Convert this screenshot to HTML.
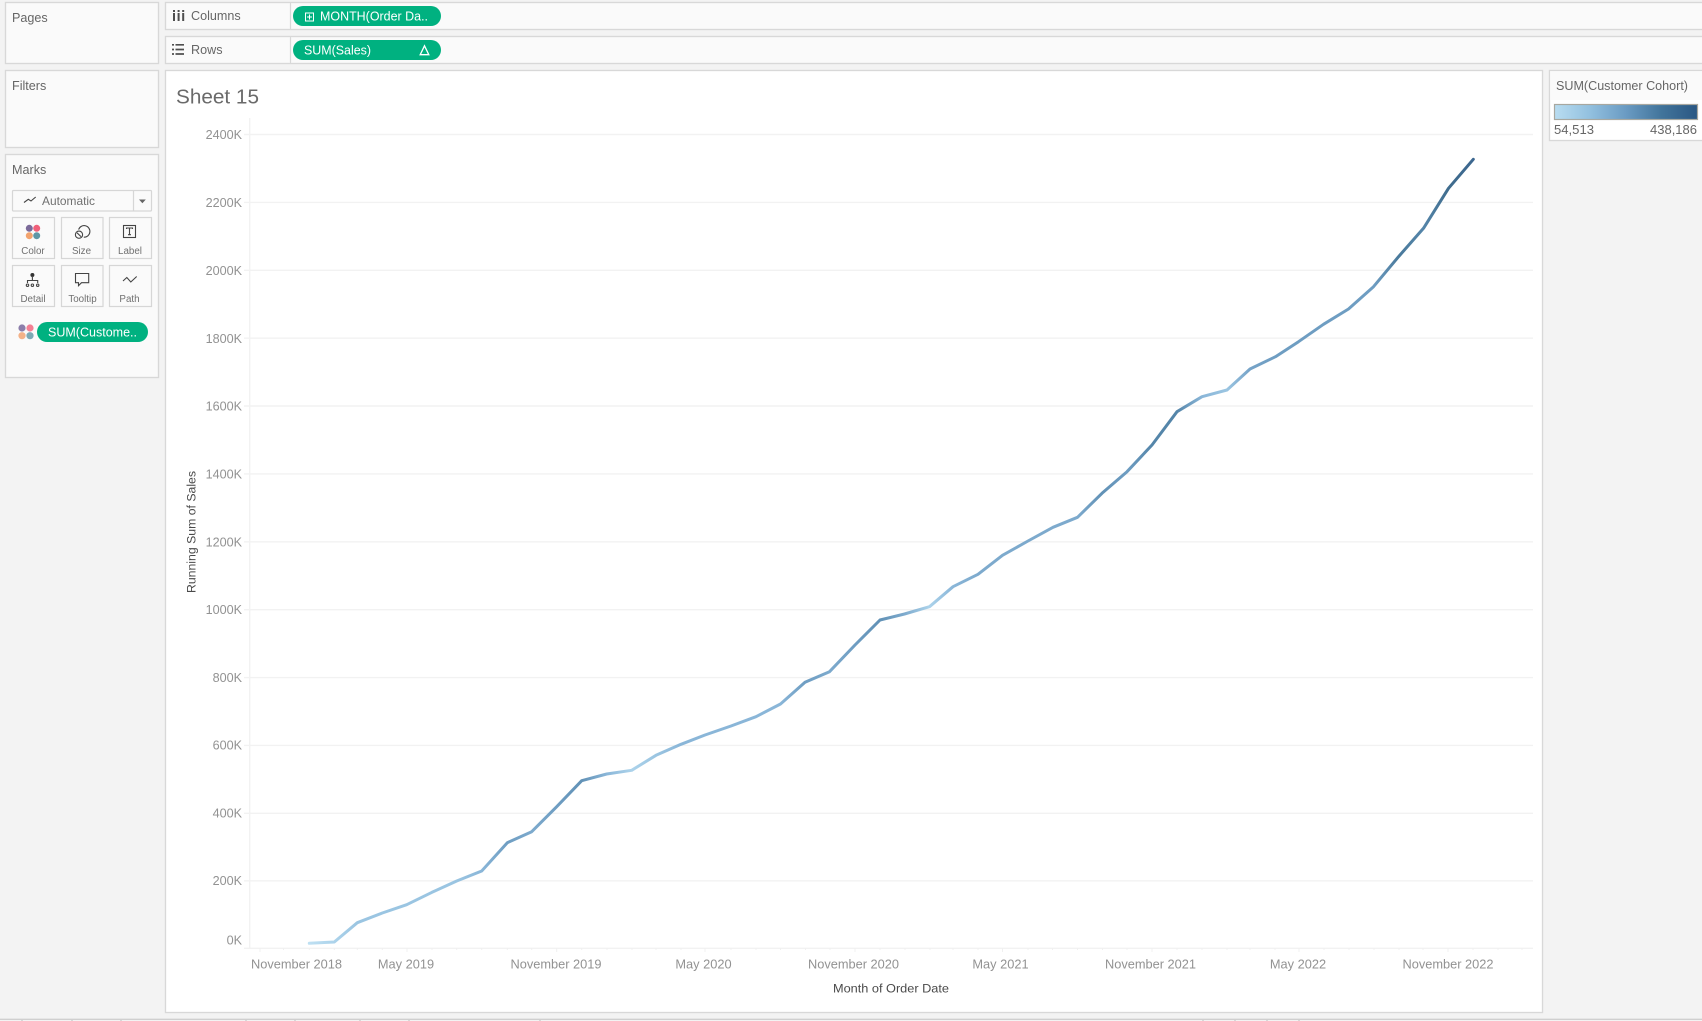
<!DOCTYPE html>
<html lang="en">
<head>
<meta charset="utf-8">
<title>Sheet 15</title>
<style>
html,body{margin:0;padding:0;width:1702px;height:1021px;overflow:hidden;background:#f3f3f3}
svg{display:block}
text{font-family:"Liberation Sans",sans-serif}
.p{fill:#fafafa;stroke:#d8d8d8;stroke-width:1.3}
.c{fill:#fafafa;stroke:#d6d6d6;stroke-width:1.2}
.h{font-size:12.6px;fill:#666}
.s{font-size:12.6px;fill:#666}
.k{font-size:12.6px;fill:#929292;text-anchor:end}
.x{font-size:12.8px;fill:#929292;text-anchor:middle}
.m{font-size:9.8px;fill:#707070;text-anchor:middle}
.w{font-size:12.8px;fill:#fff}
.a{font-size:12.4px;fill:#4a4a4a}
.g{stroke:#f2f2f2;stroke-width:1.4;fill:none}
.i{fill:none;stroke:#444;stroke-width:1.1}
</style>
</head>
<body>
<svg xmlns="http://www.w3.org/2000/svg" width="1702" height="1021" viewBox="0 0 1702 1021">
<defs>
<linearGradient id="lg" gradientUnits="userSpaceOnUse" x1="309.3" y1="0" x2="1473.3" y2="0">
<stop offset="0" stop-color="#b9ddf1"/><stop offset=".0215" stop-color="#a5cfe9"/><stop offset=".0412" stop-color="#92c0df"/><stop offset=".0627" stop-color="#92c0df"/><stop offset=".0837" stop-color="#92c0df"/><stop offset=".1054" stop-color="#92c0df"/><stop offset=".1266" stop-color="#92c0df"/><stop offset=".1481" stop-color="#80b0d5"/><stop offset=".1701" stop-color="#6295bd"/><stop offset=".1911" stop-color="#72a3c9"/><stop offset=".2125" stop-color="#6295bd"/><stop offset=".2340" stop-color="#5488b0"/><stop offset=".2555" stop-color="#80b0d5"/><stop offset=".2770" stop-color="#a5cfe9"/><stop offset=".2979" stop-color="#92c0df"/><stop offset=".3193" stop-color="#80b0d5"/><stop offset=".3400" stop-color="#80b0d5"/><stop offset=".3623" stop-color="#80b0d5"/><stop offset=".3838" stop-color="#80b0d5"/><stop offset=".4048" stop-color="#80b0d5"/><stop offset=".4259" stop-color="#6295bd"/><stop offset=".4469" stop-color="#72a3c9"/><stop offset=".4688" stop-color="#6295bd"/><stop offset=".4903" stop-color="#5488b0"/><stop offset=".5113" stop-color="#72a3c9"/><stop offset=".5328" stop-color="#a5cfe9"/><stop offset=".5530" stop-color="#80b0d5"/><stop offset=".5745" stop-color="#72a3c9"/><stop offset=".5955" stop-color="#72a3c9"/><stop offset=".6174" stop-color="#72a3c9"/><stop offset=".6389" stop-color="#72a3c9"/><stop offset=".6600" stop-color="#72a3c9"/><stop offset=".6810" stop-color="#5488b0"/><stop offset=".7025" stop-color="#6295bd"/><stop offset=".7240" stop-color="#467ba2"/><stop offset=".7454" stop-color="#467ba2"/><stop offset=".7669" stop-color="#80b0d5"/><stop offset=".7884" stop-color="#92c0df"/><stop offset=".8082" stop-color="#6a9bc3"/><stop offset=".8301" stop-color="#6295bd"/><stop offset=".8498" stop-color="#6295bd"/><stop offset=".8713" stop-color="#6295bd"/><stop offset=".8928" stop-color="#6295bd"/><stop offset=".9143" stop-color="#6295bd"/><stop offset=".9357" stop-color="#3a6e93"/><stop offset=".9572" stop-color="#467ba2"/><stop offset=".9787" stop-color="#2f6084"/><stop offset="1" stop-color="#2c5a86"/>
</linearGradient>
<linearGradient id="lb" x1="0" y1="0" x2="1" y2="0">
<stop offset="0" stop-color="#b9ddf1"/><stop offset=".25" stop-color="#92c0df"/><stop offset=".5" stop-color="#6a9bc3"/><stop offset=".75" stop-color="#41749b"/><stop offset="1" stop-color="#2a5783"/>
</linearGradient>
</defs>

<!-- side panels -->
<rect class="p" x="5.5" y="2.5" width="153" height="61"/>
<rect class="p" x="5.5" y="70.5" width="153" height="77"/>
<rect class="p" x="5.5" y="154.5" width="153" height="223"/>
<text class="h" x="12" y="22">Pages</text>
<text class="h" x="12" y="90">Filters</text>
<text class="h" x="12" y="174">Marks</text>

<!-- shelves -->
<rect class="p" x="165.5" y="2.5" width="1540" height="27"/>
<rect class="p" x="165.5" y="36.5" width="1540" height="27"/>
<path d="M290.5 3V29M290.5 37V63" stroke="#d8d8d8" stroke-width="1.2"/>
<path d="M174 13V21M178.6 13V21M183.2 13V21" stroke="#4f4f4f" stroke-width="2"/>
<path d="M174 10V12M178.6 10V12M183.2 10V12" stroke="#4f4f4f" stroke-width="2"/>
<path d="M175.5 44.8H184M175.5 49.5H184M175.5 54H184" stroke="#4f4f4f" stroke-width="1.7"/>
<path d="M172 44.8H174M172 49.5H174M172 54H174" stroke="#4f4f4f" stroke-width="1.7"/>
<text class="s" x="191" y="20">Columns</text>
<text class="s" x="191" y="54">Rows</text>

<rect x="293" y="6" width="148" height="20" rx="10" fill="#00b180"/>
<rect x="305.5" y="13" width="8" height="8" fill="none" stroke="#fff" stroke-width="1"/>
<path d="M309.5 14.5V19.5M307 17H312" stroke="#fff" stroke-width="1"/>
<text class="w" x="320" y="20.4" textLength="108" lengthAdjust="spacingAndGlyphs">MONTH(Order Da..</text>
<rect x="293" y="40" width="148" height="20" rx="10" fill="#00b180"/>
<text class="w" x="304" y="54.4" textLength="67" lengthAdjust="spacingAndGlyphs">SUM(Sales)</text>
<path d="M424.5 45.8L428.8 54.7H420.2Z" fill="none" stroke="#fff" stroke-width="1.3"/>

<!-- marks -->
<rect class="c" x="12.5" y="190.5" width="139" height="20.5" rx="1"/>
<path d="M133.5 191V211" stroke="#d6d6d6" stroke-width="1.2"/>
<path d="M24 202.5L28.3 199.3L31 201L35.7 197" class="i"/>
<text x="42" y="205" font-size="12" fill="#707070" textLength="53" lengthAdjust="spacingAndGlyphs">Automatic</text>
<path d="M139 199.5H145.8L142.4 203.3Z" fill="#666"/>

<rect class="c" x="12.5" y="217.5" width="42" height="41"/>
<rect class="c" x="61.5" y="217.5" width="41.5" height="41"/>
<rect class="c" x="109.5" y="217.5" width="42" height="41"/>
<rect class="c" x="12.5" y="265.5" width="42" height="41"/>
<rect class="c" x="61.5" y="265.5" width="41.5" height="41"/>
<rect class="c" x="109.5" y="265.5" width="42" height="41"/>

<circle cx="29.3" cy="228.3" r="3.5" fill="#7b6a99"/><circle cx="36.7" cy="228.3" r="3.5" fill="#f0607a"/>
<circle cx="29.3" cy="235.7" r="3.5" fill="#f2a36e"/><circle cx="36.7" cy="235.7" r="3.5" fill="#5f97a6"/>
<text class="m" x="33" y="254">Color</text>

<path d="M78.6 229.6A5.8 5.8 0 1 1 83.8 237.2" class="i"/>
<circle cx="79" cy="234.7" r="3.6" class="i"/>
<path d="M77 232.8L81 236.6" class="i"/>
<text class="m" x="81.5" y="254">Size</text>

<rect x="123.5" y="225.5" width="12" height="12" class="i"/>
<path d="M126.5 229V228H132.5V229M129.5 228V234.5M128 234.7H131" class="i" stroke-width="1"/>
<text class="m" x="130" y="254">Label</text>

<circle cx="32.4" cy="275" r="2" fill="#333"/>
<path d="M32.4 276V281M27.5 283V280.5H37.7V283" class="i" stroke-width="1"/>
<circle cx="27.5" cy="285.2" r="1.2" class="i" stroke-width=".8"/><circle cx="32.4" cy="285.2" r="1.2" class="i" stroke-width=".8"/><circle cx="37.7" cy="285.2" r="1.2" class="i" stroke-width=".8"/>
<text class="m" x="33" y="302">Detail</text>

<path d="M75.5 273.5H88.7V282.7H81.5L78.5 285.7V282.7H75.5Z" class="i"/>
<text class="m" x="82.5" y="302">Tooltip</text>

<path d="M123 281L126.8 277.5L130.8 282L136.7 276.5" class="i"/>
<text class="m" x="129.5" y="302">Path</text>

<circle cx="22" cy="328" r="3.6" fill="#8c7eaa"/><circle cx="30" cy="328" r="3.6" fill="#f47f93"/>
<circle cx="22" cy="335.7" r="3.6" fill="#f4b288"/><circle cx="30" cy="335.7" r="3.6" fill="#7da9b5"/>
<rect x="37" y="322" width="111" height="20" rx="10" fill="#00b180"/>
<text class="w" x="48" y="336.4" textLength="89" lengthAdjust="spacingAndGlyphs">SUM(Custome..</text>

<!-- view -->
<rect x="165.5" y="70.5" width="1377" height="942" fill="#fff" stroke="#d8d8d8" stroke-width="1.3"/>
<text x="176" y="103.5" font-size="20.5" fill="#6a6a6a" textLength="83" lengthAdjust="spacingAndGlyphs">Sheet 15</text>

<!-- grid -->
<path class="g" d="M244 134.5H1533M244 202.4H1533M244 270.3H1533M244 338.2H1533M244 406H1533M244 473.9H1533M244 541.8H1533M244 609.7H1533M244 677.6H1533M244 745.4H1533M244 813.3H1533M244 880.8H1533M244 948.3H1533"/>
<path class="g" d="M249.7 118V948.3"/>
<path d="M260 948V952M283.5 948V950M309.3 948V950M334.3 948V950M357.3 948V950M382.3 948V950M407 948V952M432 948V950M456.7 948V950M481.7 948V950M507.3 948V950M531.7 948V950M556.7 948V952M581.7 948V950M607 948V950M632 948V950M656 948V950M681 948V950M705 948V952M731 948V950M756 948V950M780.5 948V950M805.5 948V950M830 948V950M855 948V952M880 948V950M905 948V950M930 948V950M953 948V950M978 948V950M1002.5 948V952M1028 948V950M1052.5 948V950M1077.5 948V950M1102.5 948V950M1127 948V950M1152 948V952M1177 948V950M1202 948V950M1227 948V950M1250 948V950M1275 948V950M1299 948V952M1324 948V950M1349 948V950M1374 948V950M1399 948V950M1423 948V950M1448 948V952M1473 948V950M1498 948V950M1522 948V950" stroke="#f0f0f0" stroke-width="1"/>

<!-- y labels -->
<text class="k" x="242" y="139">2400K</text>
<text class="k" x="242" y="207">2200K</text>
<text class="k" x="242" y="275">2000K</text>
<text class="k" x="242" y="343">1800K</text>
<text class="k" x="242" y="410.5">1600K</text>
<text class="k" x="242" y="478.5">1400K</text>
<text class="k" x="242" y="546.5">1200K</text>
<text class="k" x="242" y="614">1000K</text>
<text class="k" x="242" y="682">800K</text>
<text class="k" x="242" y="749.5">600K</text>
<text class="k" x="242" y="817.5">400K</text>
<text class="k" x="242" y="885">200K</text>
<text class="k" x="242" y="944.3">0K</text>

<!-- x labels -->
<text class="x" x="296.5" y="968.3">November 2018</text>
<text class="x" x="406" y="968.3">May 2019</text>
<text class="x" x="556" y="968.3">November 2019</text>
<text class="x" x="703.5" y="968.3">May 2020</text>
<text class="x" x="853.5" y="968.3">November 2020</text>
<text class="x" x="1000.5" y="968.3">May 2021</text>
<text class="x" x="1150.5" y="968.3">November 2021</text>
<text class="x" x="1298" y="968.3">May 2022</text>
<text class="x" x="1448" y="968.3">November 2022</text>

<text class="a" x="891" y="992.5" text-anchor="middle" textLength="116" lengthAdjust="spacingAndGlyphs">Month of Order Date</text>
<text class="a" transform="translate(195.5 532) rotate(-90)" text-anchor="middle" textLength="122" lengthAdjust="spacingAndGlyphs">Running Sum of Sales</text>

<!-- line -->
<polyline fill="none" stroke="url(#lg)" stroke-opacity=".92" stroke-width="3" stroke-linejoin="round" stroke-linecap="round" points="309.3,943.3 334.3,942 357.3,922.7 382.3,913 406.7,904.7 432,892.3 456.7,881 481.7,871 507.3,842.7 531.7,831.7 556.7,806.7 581.7,780.7 606.7,774 631.7,770.3 656,755.3 681,744.3 705,735 731,726 756,716.7 780.5,704 805,682.3 829.5,671.7 855,645 880,620 904.5,614 929.5,606.7 953,586.7 978,574.3 1002.5,555.3 1028,541 1053,527.3 1077.5,517.3 1102,493.3 1127,471.7 1152,445 1177,411.7 1202,396.7 1227,390 1250,369 1275.5,356.7 1298.5,341.7 1323.5,324.3 1348.5,309 1373.5,286.7 1398.5,256.7 1423.5,228.3 1448.5,188.3 1473.3,159.3"/>

<!-- legend -->
<rect x="1549.5" y="70.5" width="160" height="70" fill="#fff" stroke="#d8d8d8" stroke-width="1.3"/>
<rect x="1550.2" y="71.2" width="155" height="28.8" fill="#fafafa"/>
<text class="s" x="1556" y="90" textLength="132" lengthAdjust="spacingAndGlyphs">SUM(Customer Cohort)</text>
<rect x="1554.5" y="104.5" width="143" height="15" fill="url(#lb)" stroke="#a8a8a0" stroke-width="1.2"/>
<text x="1554" y="134" font-size="12.6" fill="#666" textLength="40" lengthAdjust="spacingAndGlyphs">54,513</text>
<text x="1650" y="134" font-size="12.6" fill="#666" textLength="47" lengthAdjust="spacingAndGlyphs">438,186</text>

<!-- bottom strip -->
<path d="M0 1019.3H1702" stroke="#cfcfcf" stroke-width="1.4"/>
<path d="M22 1020V1021M72 1020V1021M121 1020V1021M246 1020V1021M295 1020V1021M360 1020V1021M409 1020V1021M540 1020V1021M1203 1020V1021M1235 1020V1021M1267 1020V1021M1299 1020V1021" stroke="#bdbdbd"/>
</svg>
</body>
</html>
